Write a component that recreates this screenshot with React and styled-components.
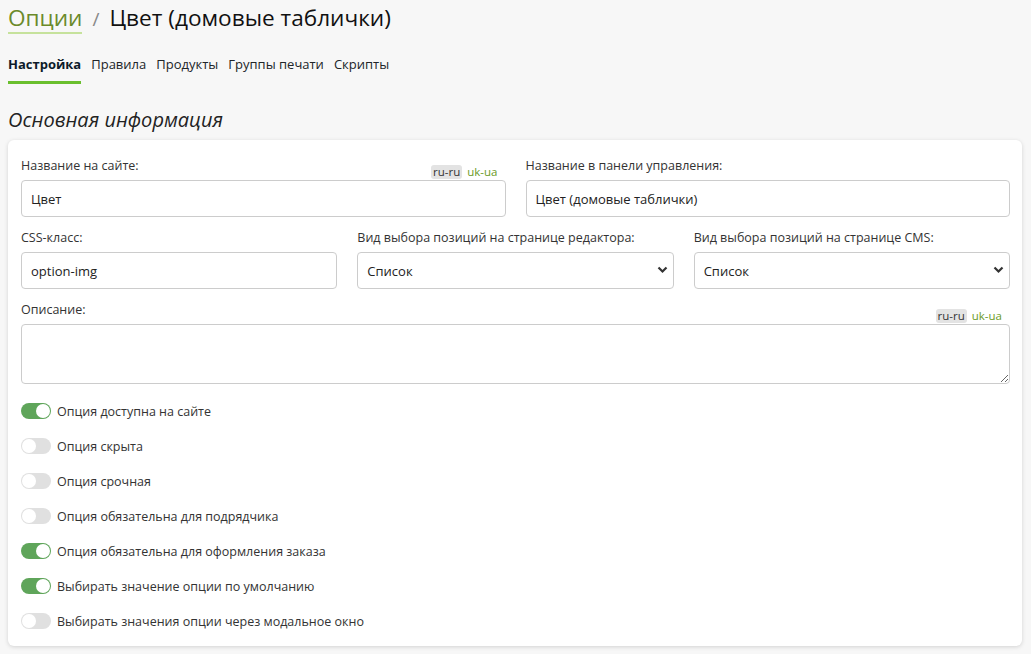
import React from "react";
import styled, { createGlobalStyle } from "styled-components";

const Global = createGlobalStyle`
  html, body { margin: 0; padding: 0; background: #f7f7f7; }
  body { font-family: "Open Sans", "Noto Sans", sans-serif; color: #212529; }
  * { box-sizing: border-box; }
`;

const Page = styled.div`
  padding: 0 9px 8px 8px;
  width: 1031px;
`;

const Header = styled.h1`
  margin: 0;
  padding-top: 3px;
  font-size: 22.6px;
  font-weight: 400;
  line-height: 30px;
  display: flex;
  align-items: baseline;
  gap: 10px;
  color: #111;
`;

const Crumb = styled.span`
  color: #6b8a2a;
  border-bottom: 2px solid #c6e29c;
  line-height: 28px;
`;

const Sep = styled.span`
  color: #888;
  font-size: 19px;
`;

const Tabs = styled.nav`
  display: flex;
  gap: 10px;
  margin-top: 21px;
`;

const Tab = styled.a`
  font-size: 13px;
  line-height: 18px;
  color: ${p => (p.$active ? "#0d1b2a" : "#212529")};
  font-weight: ${p => (p.$active ? 700 : 400)};
  padding-bottom: 8px;
  border-bottom: 3px solid ${p => (p.$active ? "#6abf2e" : "transparent")};
  text-decoration: none;
`;

const SectionTitle = styled.h2`
  margin: 23px 0 7px;
  font-size: 20px;
  font-weight: 400;
  font-style: italic;
  line-height: 26px;
  color: #222;
`;

const Card = styled.div`
  background: #fff;
  border-radius: 6px;
  box-shadow: 0 1px 4px rgba(0, 0, 0, 0.15);
  padding: 13px 12px 16px 13px;
`;

const Row = styled.div`
  display: grid;
  grid-template-columns: repeat(${p => p.$cols}, 1fr);
  column-gap: 20px;
  margin-bottom: 8px;
`;

const Field = styled.div`
  display: flex;
  flex-direction: column;
`;

const LabelLine = styled.div`
  display: flex;
  align-items: flex-end;
  justify-content: space-between;
  height: 27px;
`;

const Label = styled.label`
  font-size: 12.5px;
  color: #333;
  line-height: 16px;
  margin-bottom: 6px;
`;

const Langs = styled.div`
  display: flex;
  gap: 3px;
  font-size: 11.5px;
  line-height: 14px;
  margin-bottom: 1px;
  margin-right: 6px;
`;

const Lang = styled.span`
  padding: 0 2px;
  border-radius: 3px;
  color: ${p => (p.$active ? "#333" : "#6a9a1f")};
  background: ${p => (p.$active ? "#e3e3e3" : "transparent")};
`;

const Input = styled.input`
  height: 37px;
  border: 1px solid #ccc;
  border-radius: 4px;
  padding: 0 9px;
  font: inherit;
  font-size: 13px;
  color: #222;
  outline: none;
  width: 100%;
`;

const SelectWrap = styled.div`
  position: relative;
`;

const Select = styled.select`
  appearance: none;
  width: 100%;
  height: 37px;
  border: 1px solid #ccc;
  border-radius: 4px;
  padding: 0 9px;
  background: #fff;
  font: inherit;
  font-size: 13px;
  color: #222;
`;

const Chevron = styled.svg`
  position: absolute;
  right: 6px;
  top: 14px;
  pointer-events: none;
`;

const TextArea = styled.textarea`
  height: 60px;
  border: 1px solid #ccc;
  border-radius: 4px;
  font: inherit;
  resize: vertical;
  width: 100%;
`;

const Toggles = styled.div`
  display: flex;
  flex-direction: column;
  gap: 17px;
  padding-top: 10px;
`;

const ToggleRow = styled.label`
  display: flex;
  align-items: center;
  gap: 6px;
  height: 18px;
  font-size: 12.5px;
  color: #333;
`;

const Track = styled.span`
  position: relative;
  width: 30px;
  height: 16px;
  border-radius: 8px;
  background: ${p => (p.$on ? "#5fa55a" : "#e0e0e0")};
  flex-shrink: 0;
`;

const Knob = styled.span`
  position: absolute;
  top: 1px;
  left: ${p => (p.$on ? "15px" : "1px")};
  width: 14px;
  height: 14px;
  border-radius: 50%;
  background: #fff;
`;

function LangTags() {
  return (
    <Langs>
      <Lang $active>ru-ru</Lang>
      <Lang>uk-ua</Lang>
    </Langs>
  );
}

function Dropdown({ value }) {
  return (
    <SelectWrap>
      <Select defaultValue={value}>
        <option>{value}</option>
      </Select>
      <Chevron width="11" height="8" viewBox="0 0 11 8">
        <path d="M1.5 1.5 L5.5 5.5 L9.5 1.5" fill="none" stroke="#333" strokeWidth="2.2" />
      </Chevron>
    </SelectWrap>
  );
}

const toggles = [
  ["Опция доступна на сайте", true],
  ["Опция скрыта", false],
  ["Опция срочная", false],
  ["Опция обязательна для подрядчика", false],
  ["Опция обязательна для оформления заказа", true],
  ["Выбирать значение опции по умолчанию", true],
  ["Выбирать значения опции через модальное окно", false],
];

export default function App() {
  return (
    <>
      <Global />
      <Page>
        <Header>
          <Crumb>Опции</Crumb>
          <Sep>/</Sep>
          <span>Цвет (домовые таблички)</span>
        </Header>
        <Tabs>
          <Tab $active>Настройка</Tab>
          <Tab>Правила</Tab>
          <Tab>Продукты</Tab>
          <Tab>Группы печати</Tab>
          <Tab>Скрипты</Tab>
        </Tabs>
        <SectionTitle>Основная информация</SectionTitle>
        <Card>
          <Row $cols={2}>
            <Field>
              <LabelLine>
                <Label>Название на сайте:</Label>
                <LangTags />
              </LabelLine>
              <Input defaultValue="Цвет" />
            </Field>
            <Field>
              <LabelLine>
                <Label>Название в панели управления:</Label>
              </LabelLine>
              <Input defaultValue="Цвет (домовые таблички)" />
            </Field>
          </Row>
          <Row $cols={3}>
            <Field>
              <LabelLine>
                <Label>CSS-класс:</Label>
              </LabelLine>
              <Input defaultValue="option-img" />
            </Field>
            <Field>
              <LabelLine>
                <Label>Вид выбора позиций на странице редактора:</Label>
              </LabelLine>
              <Dropdown value="Список" />
            </Field>
            <Field>
              <LabelLine>
                <Label>Вид выбора позиций на странице CMS:</Label>
              </LabelLine>
              <Dropdown value="Список" />
            </Field>
          </Row>
          <Row $cols={1}>
            <Field>
              <LabelLine>
                <Label>Описание:</Label>
                <LangTags />
              </LabelLine>
              <TextArea />
            </Field>
          </Row>
          <Toggles>
            {toggles.map(([t, on]) => (
              <ToggleRow key={t}>
                <Track $on={on}>
                  <Knob $on={on} />
                </Track>
                {t}
              </ToggleRow>
            ))}
          </Toggles>
        </Card>
      </Page>
    </>
  );
}
